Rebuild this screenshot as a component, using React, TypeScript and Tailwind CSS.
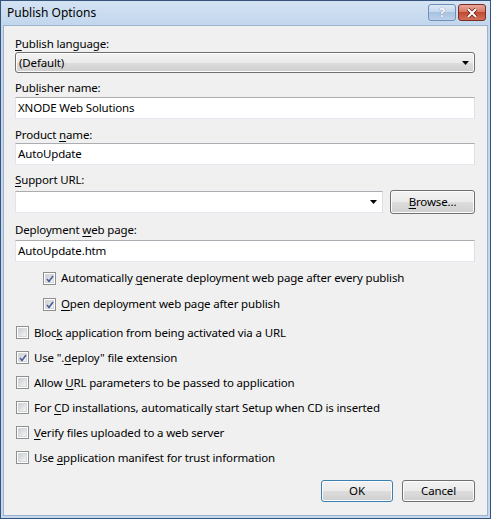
import React from "react";

const font = "font-['Noto_Sans','Liberation_Sans',sans-serif] text-[11.5px] tracking-[-0.15px] leading-[16px] text-black";
const btnStyle =
  "flex items-center justify-center rounded-[3px] border bg-[linear-gradient(to_bottom,#f2f2f2_0%,#ebebeb_50%,#dddddd_50%,#cfcfcf_100%)] shadow-[inset_0_0_0_1px_#fcfcfc]";
const inputStyle = "h-[22px] border border-[#abadb3] border-l-[#e2e3ea] border-r-[#dbdfe6] border-b-[#e3e9ef] bg-white pl-[2px] flex items-center";

function U({ children }: { children: React.ReactNode }) {
  return <span className="underline underline-offset-[2px] decoration-1">{children}</span>;
}

function CheckBox({ checked }: { checked: boolean }) {
  return (
    <span className="relative flex h-[13px] w-[13px] shrink-0 items-center justify-center border border-[#8e8f8f] bg-white">
      <span className="h-[9px] w-[9px] border border-[#d6d9dc] bg-[linear-gradient(135deg,#cbcfd5,#f4f4f4)]" />
      {checked && (
        <svg className="absolute left-[1px] top-[1px]" width="10" height="10" viewBox="0 0 10 10">
          <path d="M2 5 L4 7.5 L8 2" fill="none" stroke="#4a5f97" strokeWidth="1.6" />
        </svg>
      )}
    </span>
  );
}

function Check({ checked, children, tall }: { checked: boolean; children: React.ReactNode; tall?: boolean }) {
  return (
    <div className={`flex items-center gap-[5px] ${tall ? "h-[26px]" : "h-[25px]"}`}>
      <CheckBox checked={checked} />
      <span>{children}</span>
    </div>
  );
}

function Arrow() {
  return (
    <svg width="7" height="4" viewBox="0 0 7 4">
      <path d="M0 0 H7 L3.5 4 Z" fill="#000" />
    </svg>
  );
}

export default function App() {
  return (
    <div className={`flex h-[519px] w-[491px] flex-col border border-[#34547c] bg-[#c4d7ed] ${font}`}>
      {/* title bar */}
      <div className="flex h-[24px] shrink-0 items-center justify-between bg-[linear-gradient(to_bottom,#d4e3f4,#c2d6ec)] pl-[6px] pr-[4px]">
        <span className="text-[12px] tracking-normal text-black">Publish Options</span>
        <div className="flex gap-[2px] self-start pt-[3px]">
          <div className="flex h-[17px] w-[28px] items-center justify-center rounded-[3px] border border-[#6d8fb8] bg-[linear-gradient(to_bottom,#dce8f5_0%,#c3d6ec_50%,#a8c2e0_50%,#bcd1ea_100%)] text-[12px] font-bold leading-none text-white [text-shadow:0_0_1px_#4a6487]">
            ?
          </div>
          <div className="flex h-[17px] w-[28px] items-center justify-center rounded-[3px] border border-[#7a2b22] bg-[linear-gradient(to_bottom,#e8a89c_0%,#d6735f_50%,#c24a32_50%,#d2705a_100%)]">
            <svg width="12" height="10" viewBox="0 0 12 10">
              <path d="M2 1 L10 9 M10 1 L2 9" stroke="#5a1c14" strokeWidth="3.4" />
              <path d="M2 1 L10 9 M10 1 L2 9" stroke="#fff" strokeWidth="2" />
            </svg>
          </div>
        </div>
      </div>

      {/* client area */}
      <div className="mx-[2px] mb-[2px] flex flex-1 flex-col border border-[#9bb3cf] bg-[#f0f0f0] pl-[11px] pr-[12px] pt-[10px]">
        <div>
          <U>P</U>ublish language:
        </div>
        <div className={`h-[21px] border-[#707070] pl-[3px] pr-[5px] ${btnStyle} !justify-between`}>
          <span>(Default)</span>
          <Arrow />
        </div>

        <div className="mt-[7px]">
          Pub<U>l</U>isher name:
        </div>
        <div className={`mt-[1px] ${inputStyle}`}>XNODE Web Solutions</div>

        <div className="mt-[8px]">
          Product <U>n</U>ame:
        </div>
        <div className={inputStyle}>AutoUpdate</div>

        <div className="mt-[7px]">
          <U>S</U>upport URL:
        </div>
        <div className="mt-[2px] flex h-[24px] items-center gap-[7px]">
          <div className={`flex-1 justify-end pr-[5px] ${inputStyle}`}>
            <Arrow />
          </div>
          <div className={`h-[24px] w-[85px] border-[#707070] ${btnStyle}`}>
            <span>
              <U>B</U>rowse...
            </span>
          </div>
        </div>

        <div className="mt-[8px]">
          Deployment <U>w</U>eb page:
        </div>
        <div className={`mt-[2px] ${inputStyle}`}>AutoUpdate.htm</div>

        <div className="mt-[3px] pl-[28px]">
          <Check checked tall>
            Automatically <U>g</U>enerate deployment web page after every publish
          </Check>
          <Check checked tall>
            <U>O</U>pen deployment web page after publish
          </Check>
        </div>

        <div className="mt-[3px] pl-[1px]">
          <Check checked={false}>
            Bloc<U>k</U> application from being activated via a URL
          </Check>
          <Check checked>
            Use ".<U>d</U>eploy" file extension
          </Check>
          <Check checked={false}>
            Allow <U>U</U>RL parameters to be passed to application
          </Check>
          <Check checked={false}>
            For <U>C</U>D installations, automatically start Setup when CD is inserted
          </Check>
          <Check checked={false}>
            <U>V</U>erify files uploaded to a web server
          </Check>
          <Check checked={false}>
            Use <U>a</U>pplication manifest for trust information
          </Check>
        </div>

        <div className="mt-[10px] flex justify-end gap-[9px]">
          <div className={`h-[22px] w-[72px] border-[#3c7fb1] shadow-[inset_0_0_0_1px_#a3dcf5] ${btnStyle}`}>OK</div>
          <div className={`h-[22px] w-[73px] border-[#707070] ${btnStyle}`}>Cancel</div>
        </div>
      </div>
    </div>
  );
}
